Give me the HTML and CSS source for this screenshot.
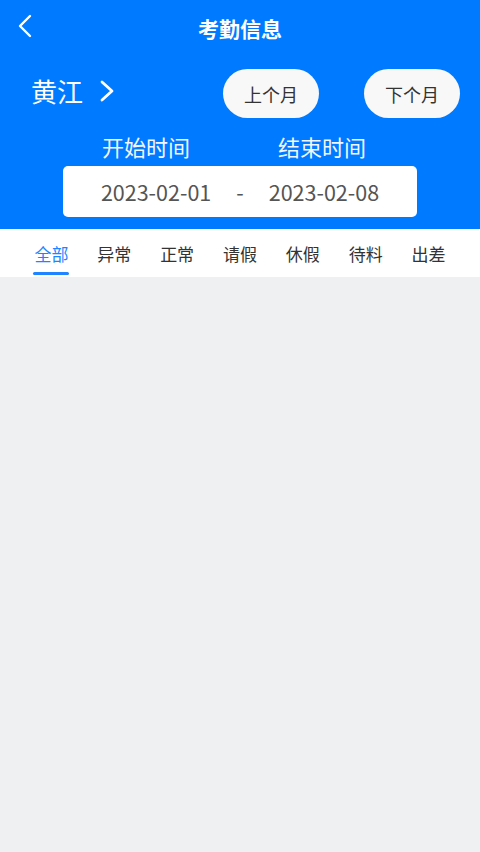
FILE: index.html
```html
<!DOCTYPE html>
<html lang="zh-CN">

<head>
  <meta charset="UTF-8">
  <meta name="viewport" content="width=device-width, initial-scale=1.0">
  <title>考勤信息</title>
  <link rel="stylesheet" href="styles.css">
</head>

<body>
  <header class="top">
    <div class="navbar">
      <button class="back" aria-label="返回">
        <svg width="16" height="24" viewBox="0 0 16 24">
          <path d="M13 2 L3 12 L13 22" fill="none" stroke="#fff" stroke-width="2.4" stroke-linecap="round" stroke-linejoin="round" />
        </svg>
      </button>
      <h1>考勤信息</h1>
    </div>

    <div class="filter">
      <div class="dept">
        <span>黄江</span>
        <svg width="18" height="22" viewBox="0 0 18 22">
          <path d="M4 2 L14 11 L4 20" fill="none" stroke="#fff" stroke-width="2.8" stroke-linecap="round" stroke-linejoin="round" />
        </svg>
      </div>
      <button class="pill">上个月</button>
      <button class="pill">下个月</button>
    </div>

    <div class="range">
      <div class="range-labels">
        <span>开始时间</span>
        <span>结束时间</span>
      </div>
      <div class="range-box">
        <span>2023-02-01</span>
        <span class="dash">-</span>
        <span>2023-02-08</span>
      </div>
    </div>
  </header>

  <nav class="tabs">
    <a class="tab active">全部</a>
    <a class="tab">异常</a>
    <a class="tab">正常</a>
    <a class="tab">请假</a>
    <a class="tab">休假</a>
    <a class="tab">待料</a>
    <a class="tab">出差</a>
  </nav>

  <main class="list"></main>
</body>

</html>
```

FILE: styles.css
```css
html,
body {
  height: 100%;
}

body {
  margin: 0;
  font-family: "Noto Sans CJK SC", "Noto Sans", sans-serif;
  background-color: #eff0f2;
  display: flex;
  flex-direction: column;
}

button {
  font-family: inherit;
  border: none;
  background: none;
  padding: 0;
  cursor: pointer;
}

.top {
  background-color: #007aff;
  color: #fff;
  padding-block-end: 12px;
}

.navbar {
  position: relative;
  height: 56px;
  display: flex;
  align-items: center;
  justify-content: center;

  & h1 {
    margin: 0;
    font-size: 21px;
    font-weight: 700;
  }
}

.back {
  position: absolute;
  left: 17px;
  top: 14px;
  display: flex;
}

.filter {
  display: flex;
  align-items: center;
  padding-inline: 31px 20px;
  margin-block-start: 13px;
  height: 49px;
}

.dept {
  display: flex;
  align-items: center;
  gap: 15px;
  font-size: 26px;
  line-height: 1;
  margin-inline-end: auto;
  margin-block-end: 5px;
}

.pill {
  width: 96px;
  height: 49px;
  border-radius: 25px;
  background-color: #f8f8f8;
  color: #333;
  font-size: 18px;

  & + .pill {
    margin-inline-start: 45px;
  }
}

.range {
  width: 354px;
  margin-inline: auto;
  margin-block-start: 14px;
}

.range-labels {
  display: flex;
  justify-content: space-between;
  padding-inline: 39px 51px;
  font-size: 22px;
  line-height: 28px;
  color: #f2f6ff;
}

.range-box {
  margin-block-start: 6px;
  height: 51px;
  background-color: #fff;
  border-radius: 5px;
  display: flex;
  align-items: center;
  justify-content: center;
  gap: 25px;
  font-size: 21.5px;
  color: #555;
}

.tabs {
  display: grid;
  grid-template-columns: repeat(7, 1fr);
  padding-inline: 20px;
  background-color: #fff;
  height: 48px;
}

.tab {
  display: flex;
  align-items: center;
  justify-content: center;
  font-size: 17px;
  color: #333;
  position: relative;

  &.active {
    color: #1f84ff;
  }

  &.active::after {
    content: "";
    position: absolute;
    bottom: 2px;
    left: 50%;
    width: 36px;
    height: 3px;
    margin-left: -18px;
    border-radius: 2px;
    background-color: #1f84ff;
  }
}

.list {
  flex: 1;
}
```
